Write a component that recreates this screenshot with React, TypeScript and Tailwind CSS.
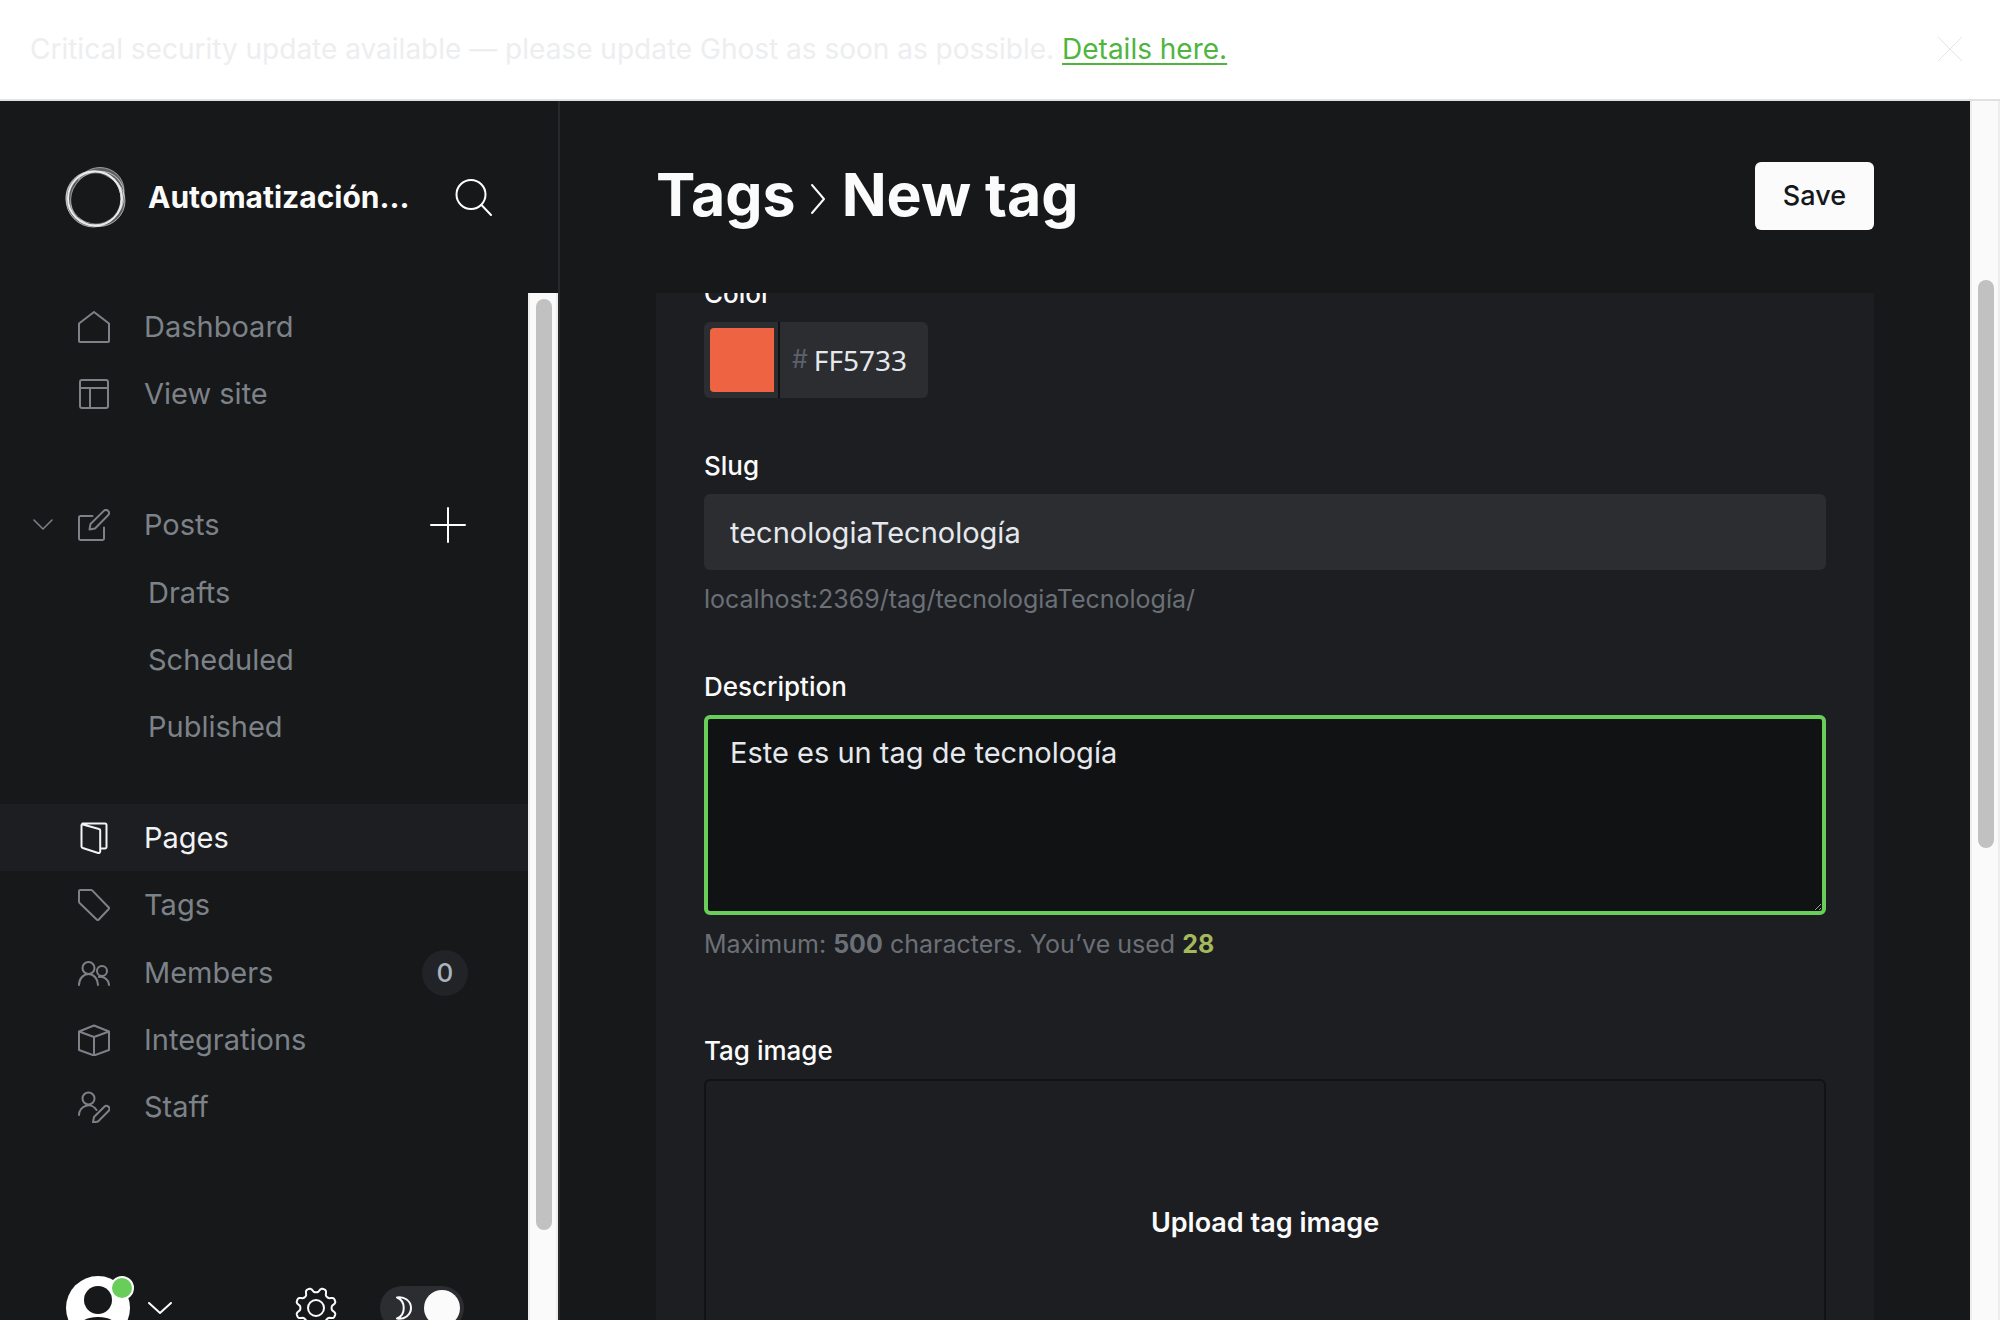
import React from "react";

const FONT = "font-[Inter,'Liberation_Sans',sans-serif]";
const FIELD_LABEL = "block h-12 text-[26px] leading-10 font-medium text-[#fbfbfb]";
const HELP_TEXT = "mt-[9px] text-[25px] leading-10 text-[#6b7077]";

type IconProps = { className?: string; children: React.ReactNode; box?: string; sw?: number };

function Icon({ className = "size-8", children, box = "0 0 32 32", sw = 2 }: IconProps) {
  return (
    <svg className={className} viewBox={box} fill="none" stroke="currentColor" strokeWidth={sw} strokeLinecap="round" strokeLinejoin="round" aria-hidden="true">
      {children}
    </svg>
  );
}

const HomeIcon = () => (
  <Icon>
    <path d="M1 12.500 16 1l15 11.500V30a1 1 0 0 1-1 1H2a1 1 0 0 1-1-1Z" />
  </Icon>
);
const SiteIcon = () => (
  <Icon>
    <rect x="2" y="2" width="28" height="28" rx="2" />
    <path d="M2 10h28M12 10v20" />
  </Icon>
);
const PostIcon = () => (
  <Icon>
    <path d="M14.500 7H2.500A1.500 1.500 0 0 0 1 8.500v21A1.500 1.500 0 0 0 2.500 31h22a1.500 1.500 0 0 0 1.500-1.500V18.500" />
    <path d="m11.500 20.500 1-5.500L25.800 1.900a3 3 0 0 1 4.300 4.300L17 19.500Z" />
  </Icon>
);
const PagesIcon = () => (
  <Icon>
    <path d="M3.500 3v21.500a1.500 1.500 0 0 0 1.200 1.500l15.500 5a1.500 1.500 0 0 0 2-1.500V8.500A1.500 1.500 0 0 0 21 7L4 2.200A1 1 0 0 1 5 1.500h22A1.500 1.500 0 0 1 28.500 3v22a1.500 1.500 0 0 1-1.500 1.500h-4.500" />
  </Icon>
);
const TagIcon = () => (
  <Icon>
    <path d="M2.200 1H13a2 2 0 0 1 1.400.6L30.500 18.200a1.500 1.500 0 0 1 0 2.100L20.800 30.500a1.500 1.500 0 0 1-2.100 0L1.600 14A2 2 0 0 1 1 12.600V2.200A1.200 1.200 0 0 1 2.200 1Z" />
  </Icon>
);
const MembersIcon = () => (
  <Icon>
    <circle cx="10.500" cy="11" r="6" />
    <path d="M1 28a9.500 11 0 0 1 19 0" />
    <circle cx="24" cy="14" r="5" />
    <path d="M21 20a8.500 8.500 0 0 1 10 8" />
  </Icon>
);
const BoxIcon = () => (
  <Icon>
    <path d="m1 7.500 15-6 15 6v18.500l-15 5.500L1 26ZM1 7.500l15 5.500 15-5.500M16 13v18.500" />
  </Icon>
);
const StaffIcon = () => (
  <Icon>
    <circle cx="10.500" cy="7.500" r="6" />
    <path d="M1 24a9.500 10 0 0 1 17.500-5" />
    <path d="m15 31.500 1-5.500L26.300 15.800a2.900 2.900 0 0 1 4.200 4.200L20 30.500Z" />
  </Icon>
);

// Eight rounded teeth, with a valley at the top.
const GEAR_PATH =
  Array.from({ length: 160 }, (_, i) => {
    const a = (i / 160) * Math.PI * 2;
    const r = 18 - 2.5 * Math.tanh(1.8 * Math.cos(8 * a));
    return `${i ? "L" : "M"}${(22 + r * Math.sin(a)).toFixed(2)} ${(22 - r * Math.cos(a)).toFixed(2)}`;
  }).join("") + "Z";

const GearIcon = () => (
  <Icon className="size-11" box="0 0 44 44">
    <path d={GEAR_PATH} />
    <circle cx="22" cy="22" r="8" />
  </Icon>
);

type NavItem = { label: string; icon?: React.ReactNode; active?: boolean; badge?: string };

function NavRow({ label, icon, active, badge }: NavItem) {
  return (
    <li>
      <a href="#" className={`flex h-[67px] items-center pr-15 pl-[78px] ${active ? "bg-[#1d1e22] text-[#f1f3f4]" : ""}`}>
        <span className="flex w-8 shrink-0 justify-center">{icon}</span>
        <span className="ml-[34px] flex-1">{label}</span>
        {badge && <span className="flex size-[46px] items-center justify-center rounded-full bg-[#222327] text-[26px] font-medium text-[#abb4be]">{badge}</span>}
      </a>
    </li>
  );
}

function SubRow({ label }: { label: string }) {
  return (
    <li>
      <a href="#" className="flex h-[67px] items-center pl-[148px]">{label}</a>
    </li>
  );
}

function Logo() {
  return (
    <svg className="size-[62px] shrink-0" viewBox="0 0 62 62" fill="none" stroke="#e8ecec" aria-hidden="true">
      <mask id="ring">
        <rect width="62" height="62" fill="#fff" stroke="none" />
        <circle cx="31.500" cy="32.500" r="25" fill="#000" stroke="none" />
      </mask>
      <g mask="url(#ring)" fill="#fff" stroke="none" opacity=".3">
        <circle cx="30" cy="33" r="28" />
        <ellipse cx="36" cy="23" rx="23.500" ry="21.500" />
        <ellipse cx="35" cy="35" rx="26" ry="25.500" />
      </g>
      <circle cx="31" cy="32.500" r="27" strokeWidth="2" />
      <ellipse cx="29.500" cy="33" rx="27.500" ry="28" strokeWidth="1" opacity=".7" />
      <ellipse cx="36" cy="24" rx="24" ry="22.500" strokeWidth="1" opacity=".55" mask="url(#ring)" />
      <ellipse cx="35" cy="35" rx="26" ry="25.500" strokeWidth="1" opacity=".6" mask="url(#ring)" />
      <ellipse cx="29" cy="31" rx="27" ry="26" strokeWidth="1" opacity=".5" mask="url(#ring)" />
      <ellipse cx="33" cy="33" rx="28" ry="25.500" strokeWidth="1" opacity=".6" transform="rotate(-45 32 32)" />
    </svg>
  );
}

export default function App() {
  return (
    <div className={`flex h-screen flex-col overflow-hidden bg-[#17181a] ${FONT}`}>
      <aside className="flex h-[101px] shrink-0 items-center justify-between border-b-2 border-[#dfe1e3] bg-white pr-[38px] pb-0.5 pl-[30px] text-[28px] text-[#eceef0]">
        <p>
          Critical security update available — please update Ghost as soon as possible.{" "}
          <a href="#" className="text-[#4fb53f] underline underline-offset-4">Details here.</a>
        </p>
        <button type="button" aria-label="Close" className="text-[#e6e6e6]">
          <Icon className="size-6" box="0 0 24 24" sw={1}>
            <path d="m0 0 24 24M24 0 0 24" />
          </Icon>
        </button>
      </aside>

      <div className="flex min-h-0 flex-1">
        <nav className="flex w-[560px] shrink-0 flex-col border-r-2 border-[#26282b] text-[29px] text-[#7c8288]">
          <div className="flex h-48 shrink-0 items-center pr-[66px] pl-16">
            <Logo />
            <span className="ml-[22px] flex-1 text-[30px] font-bold whitespace-nowrap text-[#fbfbfb]">Automatización...</span>
            <button type="button" aria-label="Search" className="text-white">
              <Icon className="size-[37px]" box="0 0 37 37" sw={2}>
                <circle cx="16" cy="15.500" r="14.500" />
                <path d="m26.500 26 9.500 10" />
              </Icon>
            </button>
          </div>
          <div className="flex min-h-0 flex-1">
            <div className="flex min-w-0 flex-1 flex-col overflow-hidden">
              <ul>
                <NavRow label="Dashboard" icon={<HomeIcon />} />
                <NavRow label="View site" icon={<SiteIcon />} />
              </ul>
              <ul className="mt-16">
                <li>
                  <div className="flex h-[67px] items-center pr-[62px] pl-8">
                    <button type="button" aria-label="Collapse posts" className="mr-6">
                      <Icon className="h-3 w-[22px]" box="0 0 22 12" sw={1.5}>
                        <path d="m2 1 9 9 9-9" />
                      </Icon>
                    </button>
                    <PostIcon />
                    <a href="#" className="ml-[34px] flex-1">Posts</a>
                    <button type="button" aria-label="New post" className="text-white">
                      <Icon className="size-9" box="0 0 36 36" sw={2}>
                        <path d="M18 1v34M1 18h34" />
                      </Icon>
                    </button>
                  </div>
                  <ul className="mt-px">
                    <SubRow label="Drafts" />
                    <SubRow label="Scheduled" />
                    <SubRow label="Published" />
                  </ul>
                </li>
              </ul>
              <ul className="mt-11">
                <NavRow label="Pages" icon={<PagesIcon />} active />
                <NavRow label="Tags" icon={<TagIcon />} />
              </ul>
              <ul className="mt-px">
                <NavRow label="Members" icon={<MembersIcon />} badge="0" />
                <NavRow label="Integrations" icon={<BoxIcon />} />
                <NavRow label="Staff" icon={<StaffIcon />} />
              </ul>
              <div className="mt-[136px] flex h-16 shrink-0 items-center pr-16 pl-[66px] text-[#fbfbfb]">
                <button type="button" aria-label="Account" className="relative">
                  <svg className="size-16" viewBox="0 0 64 64" aria-hidden="true">
                    <circle cx="32" cy="32" r="32" fill="#fff" />
                    <circle cx="32" cy="24" r="14" fill="#17181a" />
                    <path d="M10 55a22 14 0 0 1 44 0 32 32 0 0 1-44 0Z" fill="#17181a" />
                  </svg>
                  <span className="absolute top-0 -right-1 size-6 rounded-full border-2 border-white bg-[#69cd5a]" />
                </button>
                <button type="button" aria-label="Account menu" className="ml-[18px]">
                  <Icon className="h-3 w-6" box="0 0 24 12" sw={2}>
                    <path d="m1 1 11 10L23 1" />
                  </Icon>
                </button>
                <a href="#" aria-label="Settings" className="ml-auto">
                  <GearIcon />
                </a>
                <button type="button" role="switch" aria-checked="true" aria-label="Night mode" className="ml-[42px] flex h-11 w-[84px] items-center justify-between rounded-full bg-[#2b2d31] pr-1 pl-4">
                  <Icon className="h-6 w-4" box="0 0 16 24" sw={2}>
                    <path d="M1 1.500C8 0 15 5 15 12S8 24 1 22.500C10 19 10 5 1 1.500Z" />
                  </Icon>
                  <span className="size-9 rounded-full bg-[#fbfbfb]" />
                </button>
              </div>
            </div>
            <div className="w-[30px] shrink-0 border-x-2 border-[#ededed] bg-[#fafafa] pt-1.5 pr-1 pl-1.5">
              <div className="h-[931px] rounded-full bg-[#c1c1c1]" />
            </div>
          </div>
        </nav>

        <main className="flex min-w-0 flex-1 flex-col px-24">
          <header className="flex h-48 shrink-0 items-center justify-between pb-0.5">
            <h1 className="flex items-center pb-0.5 text-[59px] font-bold text-[#fbfbfb]">
              <a href="#">Tags</a>
              <Icon className="mt-2 mr-4 ml-3.5 h-8 w-4" box="0 0 16 32" sw={2}>
                <path d="m2 2 12 14L2 30" />
              </Icon>
              New tag
            </h1>
            <button type="button" className="h-17 rounded-md bg-[#fbfbfb] px-7 text-[27px] font-medium text-[#15171a]">Save</button>
          </header>
          <form className="min-h-0 flex-1 overflow-hidden bg-[#1d1e22] px-12 text-[#fbfbfb]">
            <div className="-mt-[19px]">
              <label htmlFor="color" className={FIELD_LABEL}>Color</label>
              <div className="flex h-19 w-56 overflow-hidden rounded-md bg-[#2b2d31]">
                <div className="w-[76px] shrink-0 border-r-2 border-[#111214] py-1.5 pr-1 pl-1.5">
                  <div className="h-full rounded-l-sm bg-[#ee6443]" />
                </div>
                <span className="flex items-center pl-3 text-[25px] text-[#5d6269]">#</span>
                <input id="color" defaultValue="FF5733" className="w-32 pl-1.5 font-['Noto_Sans',sans-serif] text-[28px] text-[#e5e9ed] outline-none" />
              </div>
            </div>
            <div className="mt-12">
              <label htmlFor="slug" className={FIELD_LABEL}>Slug</label>
              <input id="slug" defaultValue="tecnologiaTecnología" className="block h-19 w-full rounded-md bg-[#2b2d31] px-[26px] text-[29px] text-[#e5e9ed] outline-none" />
              <p className={HELP_TEXT}>localhost:2369/tag/tecnologiaTecnología/</p>
            </div>
            <div className="mt-12">
              <label htmlFor="description" className={FIELD_LABEL}>Description</label>
              <textarea id="description" defaultValue="Este es un tag de tecnología" className="block h-50 w-full resize rounded-md border-4 border-[#69cd5a] bg-[#111214] px-[22px] py-3.5 text-[29px] leading-10 text-[#e5e9ed] outline-none" />
              <p className={HELP_TEXT}>
                Maximum: <b>500</b> characters. You’ve used <b className="text-[#a4b95c]">28</b>
              </p>
            </div>
            <div className="mt-[67px]">
              <label htmlFor="tag-image" className={FIELD_LABEL}>Tag image</label>
              <button id="tag-image" type="button" className="h-72 w-full rounded-md border-2 border-[#111214] text-[27px] font-semibold">Upload tag image</button>
            </div>
          </form>
        </main>

        <div className="w-[30px] shrink-0 border-x-2 border-[#ededed] bg-[#fafafa] pt-[179px] pr-1 pl-1.5">
          <div className="h-[568px] rounded-full bg-[#c1c1c1]" />
        </div>
      </div>
    </div>
  );
}
